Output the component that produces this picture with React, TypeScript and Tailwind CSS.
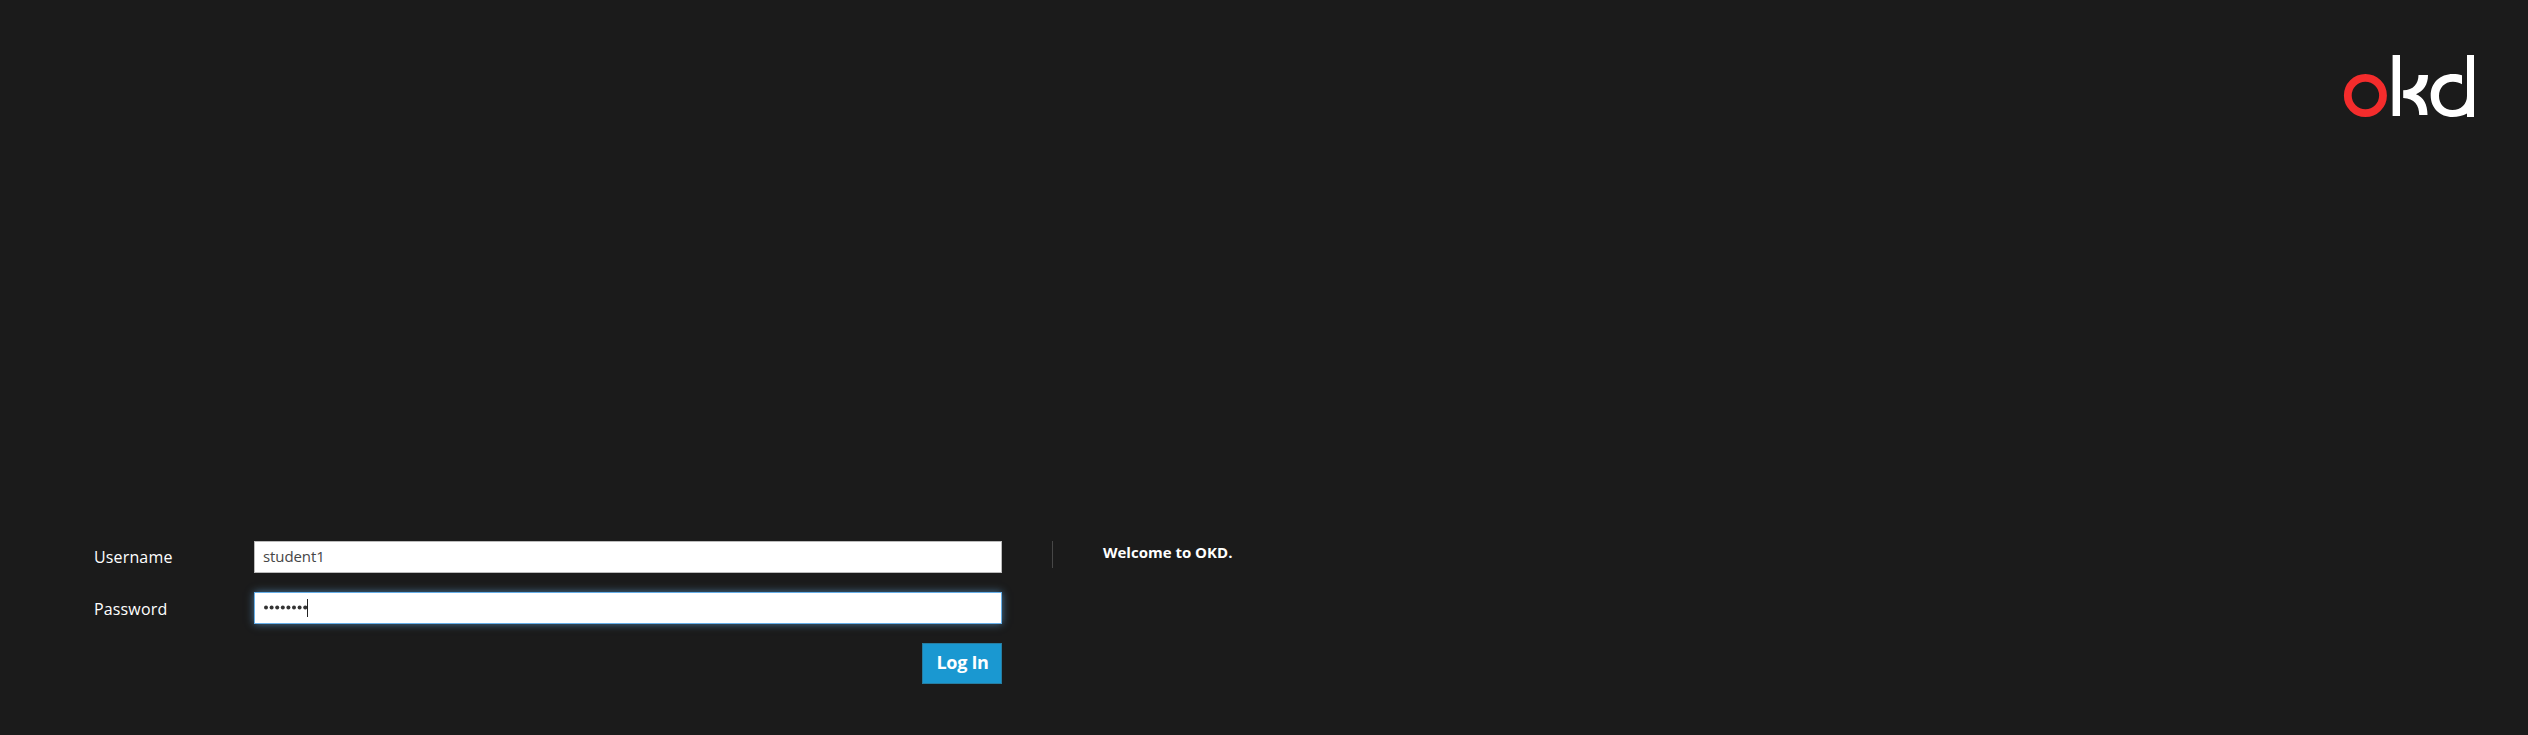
import { useState } from "react";

function OkdLogo() {
  return (
    <svg
      width="132"
      height="64"
      viewBox="0 0 132 64"
      fill="none"
      role="img"
      aria-label="OKD"
      className="block"
    >
      <circle cx="23.4" cy="41.5" r="17.6" stroke="#f42c2c" strokeWidth="7.8" />
      <rect x="50.6" y="1" width="7.4" height="61" fill="#fff" />
      <path
        d="M76.500 21H86C86 30.500 81.500 37 74 40.200C81.500 43 85.500 50.500 85.500 61H77.200C77.200 51.500 72.500 44.200 61.200 44V36.300C71.500 36.300 76.500 29.500 76.500 21Z"
        fill="#fff"
      />
      <path
        d="M120 21.200V30.300C117.500 28.700 114.500 27.800 111 27.800C102.500 27.800 97 34 97 42C97 50 102.500 56 110.500 56C119 56 125 50 125 42V1H132V63H125V59.600C121 61.800 116 63 110.500 63C98 63 88.700 54 88.700 41.500C88.700 29 98 20 111 20C114.300 20 117.400 20.400 120 21.200Z"
        fill="#fff"
      />
    </svg>
  );
}

export default function App() {
  const [username, setUsername] = useState("student1");
  return (
    <div className="flex h-[735px] w-full flex-col bg-[#1b1b1b] font-['Open_Sans',sans-serif] text-white">
      <header className="flex justify-end pt-[54px] pr-[54px]">
        <OkdLogo />
      </header>
      <main className="mt-[423px] flex items-start pl-[94px]">
        <form className="flex w-[908px] flex-col gap-[19px]" onSubmit={(e) => e.preventDefault()}>
          <div className="flex h-8 items-center">
            <label htmlFor="user" className="w-40 text-base tracking-[0.15px]">
              Username
            </label>
            <input
              id="user"
              value={username}
              onChange={(e) => setUsername(e.target.value)}
              className="h-8 flex-1 border border-[#bbb] bg-white px-2 pb-[3px] text-[15px] tracking-[-0.1px] text-[#464646] outline-none"
            />
          </div>
          <div className="flex h-8 items-center">
            <label htmlFor="pass" className="w-40 pt-0.5 text-base tracking-[0.15px]">
              Password
            </label>
            <div
              id="pass"
              className="flex h-8 flex-1 items-center border border-[#66afe9] bg-white pl-[9px] shadow-[0_0_8px_rgba(102,175,233,0.6)]"
            >
              <svg width="43" height="6" viewBox="0 0 43 6" fill="#333">
                {[0, 1, 2, 3, 4, 5, 6, 7].map((i) => (
                  <circle key={i} cx={2 + i * 5.6} cy="2.4" r="2" />
                ))}
              </svg>
              <span className="h-[18px] w-px bg-[#222]" />
            </div>
          </div>
          <button
            type="submit"
            className="flex h-[41px] w-20 items-center justify-center self-end border border-[#267da1] bg-[#1a98d1] pb-[3px] pl-px text-lg font-bold tracking-[-0.3px]"
          >
            Log In
          </button>
        </form>
        <div className="ml-[50px] h-[27px] border-l border-[#474747] pl-[50px] pt-px text-[15px] leading-[21px] font-bold">
          Welcome to OKD.
        </div>
      </main>
    </div>
  );
}
